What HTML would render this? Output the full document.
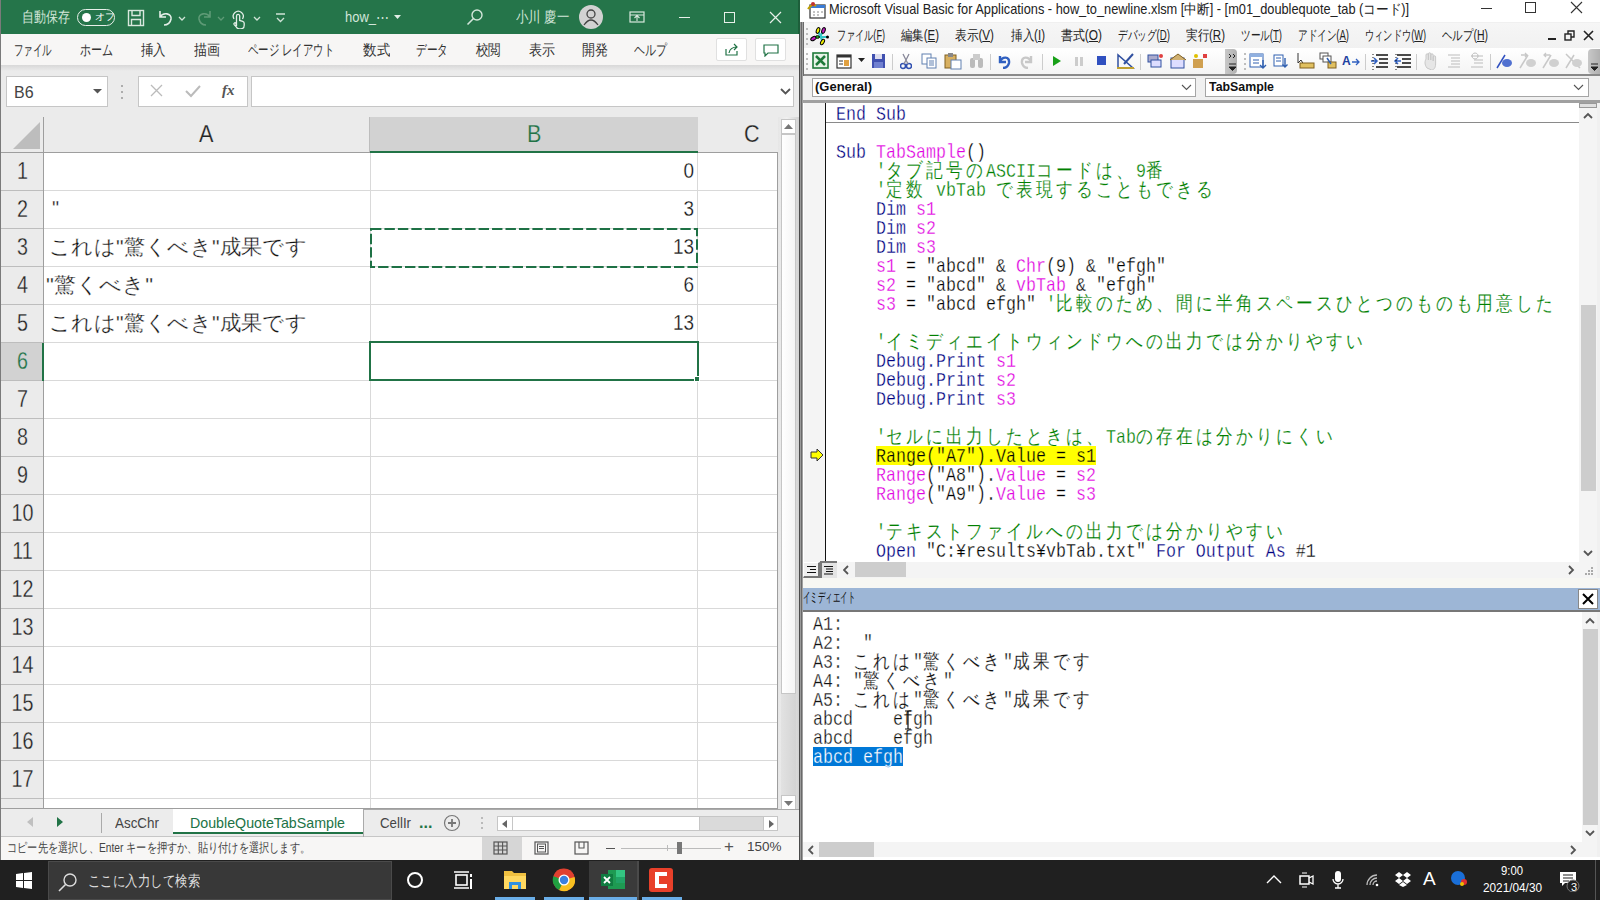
<!DOCTYPE html><html><head><meta charset="utf-8"><style>
*{box-sizing:border-box;margin:0;padding:0}
html,body{width:1600px;height:900px;overflow:hidden;background:#fff;font-family:"Liberation Sans",sans-serif;}
.a{position:absolute}
.t{position:absolute;white-space:pre;line-height:1}
.code{position:absolute;font-family:"Liberation Mono",monospace;font-size:16.667px;white-space:pre;line-height:19px;height:19px;transform:scaleY(1.2);transform-origin:0 0}
.w{font-size:17px;letter-spacing:3px}
.code{-webkit-text-stroke:0.25px #fff}
.w{-webkit-text-stroke-width:0.15px}
.k{color:#000080}.m{color:#e000e0}.c{color:#008000}
</style></head><body>
<div class="a" style="left:0px;top:0px;width:800px;height:860px;background:#ebebeb"></div>
<div class="a" style="left:0px;top:0px;width:1px;height:860px;background:#7a7a7a"></div>
<div class="a" style="left:1px;top:0px;width:799px;height:34px;background:#25754a"></div>
<div class="t" style="left:22px;top:9px;font-size:15px;color:#d3e6da;transform:scaleX(0.8000);transform-origin:0 0;">自動保存</div>
<div class="a" style="left:77px;top:9px;width:38px;height:17px;border:1.5px solid #e8f0ea;border-radius:9px"></div>
<div class="a" style="left:82px;top:13px;width:9px;height:9px;background:#fff;border-radius:50%"></div>
<div class="t" style="left:95px;top:12px;font-size:10px;color:#fff">オフ</div>
<svg class="a" style="left:127px;top:9px;" width="18" height="18" viewBox="0 0 18 18"><rect x="1.5" y="1.5" width="15" height="15" fill="none" stroke="#d9e8de" stroke-width="1.4"/><path d="M5 1.5 v5 h8 v-5 M4.5 16.5 v-6 h9 v6" fill="none" stroke="#d9e8de" stroke-width="1.4"/></svg>
<svg class="a" style="left:155px;top:7px;" width="120" height="22" viewBox="0 0 120 22"><path d="M5 4 v6 h6 M5 10 C8 5 17 6 16 12 C15 17 11 18 9 18" fill="none" stroke="#e3eee7" stroke-width="1.6"/><path d="M24 10 l3 3 l3 -3" fill="none" stroke="#cfe3d6" stroke-width="1.3"/><path d="M55 4 v6 h-6 M55 10 C52 5 43 6 44 12 C45 17 49 18 51 18" fill="none" stroke="#5e9a76" stroke-width="1.6"/><path d="M63 10 l3 3 l3 -3" fill="none" stroke="#5e9a76" stroke-width="1.3"/><path d="M79 12 a5 5 0 1 1 8.5 0" fill="none" stroke="#e3eee7" stroke-width="1.3"/><path d="M81.5 19 v-10 a1.6 1.6 0 0 1 3.2 0 v4.5 l3 0.8 a2 2 0 0 1 1.5 2 v2 q0 3.5 -3.5 3.5 h-1.5 q-2 0 -3 -2 l-2 -2.2 a1.1 1.1 0 0 1 1.6 -1.5z" fill="none" stroke="#e3eee7" stroke-width="1.3"/><path d="M99 10 l3 3 l3 -3" fill="none" stroke="#cfe3d6" stroke-width="1.3"/></svg>
<svg class="a" style="left:273px;top:10px;" width="16" height="16" viewBox="0 0 16 16"><path d="M3 4 h9 M4 8 l3.5 3.5 l3.5 -3.5" fill="none" stroke="#cfe3d6" stroke-width="1.3"/></svg>
<div class="t" style="left:345px;top:9px;font-size:15px;color:#d3e6da;transform:scaleX(0.8651);transform-origin:0 0;">how_⋯</div>
<svg class="a" style="left:393px;top:13px;" width="10" height="8" viewBox="0 0 10 8"><path d="M1 2 h7 l-3.5 4z" fill="#e3eee7"/></svg>
<svg class="a" style="left:464px;top:6px;" width="22" height="22" viewBox="0 0 22 22"><circle cx="13" cy="9" r="5" fill="none" stroke="#d3e6da" stroke-width="1.4"/><path d="M9.5 12.5 L3.5 18.5" stroke="#d3e6da" stroke-width="1.6"/></svg>
<div class="t" style="left:516px;top:9px;font-size:15px;color:#d3e6da;transform:scaleX(0.8259);transform-origin:0 0;">小川 慶一</div>
<div class="a" style="left:579px;top:5px;width:24px;height:24px;border-radius:50%;background:#d2d2d2"></div>
<svg class="a" style="left:579px;top:5px;" width="24" height="24" viewBox="0 0 24 24"><circle cx="12" cy="9" r="4" fill="none" stroke="#444" stroke-width="1.3"/><path d="M5 20 q7 -10 14 0" fill="none" stroke="#444" stroke-width="1.3"/></svg>
<svg class="a" style="left:628px;top:9px;" width="20" height="16" viewBox="0 0 20 16"><rect x="2" y="3" width="14" height="10" fill="none" stroke="#d9e8de" stroke-width="1.2"/><path d="M2 6 h14 M9 12 v-5 M6.5 9 l2.5 -2.5 l2.5 2.5" fill="none" stroke="#d9e8de" stroke-width="1.1"/></svg>
<div class="a" style="left:679px;top:17px;width:11px;height:1px;background:#e8f0ea"></div>
<div class="a" style="left:724px;top:12px;width:11px;height:11px;border:1px solid #e8f0ea"></div>
<svg class="a" style="left:769px;top:11px;" width="14" height="14" viewBox="0 0 14 14"><path d="M1 1 L12 12 M12 1 L1 12" stroke="#e8f0ea" stroke-width="1.2"/></svg>
<div class="a" style="left:1px;top:34px;width:799px;height:31px;background:#f7f6f5"></div>
<div class="a" style="left:1px;top:65px;width:799px;height:6px;background:linear-gradient(#d8d8d8,#ebebeb)"></div>
<div class="t" style="left:14px;top:43px;font-size:14.5px;color:#333;transform:scaleX(0.6333);transform-origin:0 0;">ファイル</div>
<div class="t" style="left:80px;top:43px;font-size:14.5px;color:#333;transform:scaleX(0.7333);transform-origin:0 0;">ホーム</div>
<div class="t" style="left:141px;top:43px;font-size:14.5px;color:#333;transform:scaleX(0.8333);transform-origin:0 0;">挿入</div>
<div class="t" style="left:194px;top:43px;font-size:14.5px;color:#333;transform:scaleX(0.8667);transform-origin:0 0;">描画</div>
<div class="t" style="left:248px;top:43px;font-size:14.5px;color:#333;transform:scaleX(0.6934);transform-origin:0 0;">ページ レイアウト</div>
<div class="t" style="left:363px;top:43px;font-size:14.5px;color:#333;transform:scaleX(0.9000);transform-origin:0 0;">数式</div>
<div class="t" style="left:416px;top:43px;font-size:14.5px;color:#333;transform:scaleX(0.7111);transform-origin:0 0;">データ</div>
<div class="t" style="left:476px;top:43px;font-size:14.5px;color:#333;transform:scaleX(0.8333);transform-origin:0 0;">校閲</div>
<div class="t" style="left:529px;top:43px;font-size:14.5px;color:#333;transform:scaleX(0.8667);transform-origin:0 0;">表示</div>
<div class="t" style="left:582px;top:43px;font-size:14.5px;color:#333;transform:scaleX(0.8667);transform-origin:0 0;">開発</div>
<div class="t" style="left:634px;top:43px;font-size:14.5px;color:#333;transform:scaleX(0.7333);transform-origin:0 0;">ヘルプ</div>
<div class="a" style="left:716px;top:38px;width:31px;height:23px;background:#fff;border:1px solid #e0e0e0;border-radius:2px"></div>
<svg class="a" style="left:723px;top:42px;" width="18" height="16" viewBox="0 0 18 16"><path d="M3 7 v6 h11 v-4 M6 11 q1 -6 8 -6 M11 2 l3 3 l-3 3" fill="none" stroke="#217346" stroke-width="1.2"/></svg>
<div class="a" style="left:755px;top:38px;width:31px;height:23px;background:#fff;border:1px solid #e0e0e0;border-radius:2px"></div>
<svg class="a" style="left:762px;top:43px;" width="18" height="14" viewBox="0 0 18 14"><path d="M2 2 h14 v8 h-10 l-3 3 v-3 h-1z" fill="none" stroke="#217346" stroke-width="1.2"/></svg>
<div class="a" style="left:6px;top:76px;width:102px;height:31px;background:#fff;border:1px solid #c6c6c6"></div>
<div class="t" style="left:14px;top:85px;font-size:16px;color:#444">B6</div>
<svg class="a" style="left:92px;top:88px;" width="12" height="8" viewBox="0 0 12 8"><path d="M1 1 h9 l-4.5 4.5z" fill="#555"/></svg>
<svg class="a" style="left:119px;top:83px;" width="6" height="18" viewBox="0 0 6 18"><circle cx="3" cy="3" r="1" fill="#999"/><circle cx="3" cy="9" r="1" fill="#999"/><circle cx="3" cy="15" r="1" fill="#999"/></svg>
<div class="a" style="left:138px;top:76px;width:110px;height:31px;background:#fff;border:1px solid #c6c6c6"></div>
<svg class="a" style="left:150px;top:84px;" width="14" height="14" viewBox="0 0 14 14"><path d="M1 1 L12 12 M12 1 L1 12" stroke="#bbb" stroke-width="1.3"/></svg>
<svg class="a" style="left:185px;top:84px;" width="16" height="14" viewBox="0 0 16 14"><path d="M1 7 L6 12 L15 2" fill="none" stroke="#bbb" stroke-width="2"/></svg>
<div class="t" style="left:222px;top:83px;font-size:15px;color:#555;font-family:'Liberation Serif',serif;font-style:italic;font-weight:bold">fx</div>
<div class="a" style="left:251px;top:76px;width:543px;height:31px;background:#fff;border:1px solid #c6c6c6"></div>
<svg class="a" style="left:780px;top:87px;" width="12" height="9" viewBox="0 0 12 9"><path d="M1 2 L5.5 6.5 L10 2" fill="none" stroke="#555" stroke-width="1.8"/></svg>
<div class="a" style="left:1px;top:117px;width:43px;height:36px;background:#ebebeb;border-right:1px solid #bdbdbd"></div>
<svg class="a" style="left:12px;top:121px;" width="30" height="30" viewBox="0 0 30 30"><path d="M28 1 V28 H1z" fill="#bdbdbd"/></svg>
<div class="a" style="left:44px;top:117px;width:326px;height:36px;background:#ebebeb;border-right:1px solid #bdbdbd"></div>
<div class="t" style="left:199px;top:122px;font-size:24px;color:#222;-webkit-text-stroke:0.25px #ebebeb;transform:scaleX(0.9);transform-origin:0 0">A</div>
<div class="a" style="left:370px;top:117px;width:328px;height:36px;background:#d2d2d2"></div>
<div class="t" style="left:527px;top:122px;font-size:24px;color:#217346;-webkit-text-stroke:0.25px #d2d2d2;transform:scaleX(0.9);transform-origin:0 0">B</div>
<div class="a" style="left:698px;top:117px;width:80px;height:36px;background:#ebebeb"></div>
<div class="t" style="left:744px;top:122px;font-size:24px;color:#222;-webkit-text-stroke:0.25px #ebebeb;transform:scaleX(0.9);transform-origin:0 0">C</div>
<div class="a" style="left:1px;top:152px;width:777px;height:1px;background:#9e9e9e"></div>
<div class="a" style="left:370px;top:151px;width:328px;height:2px;background:#217346"></div>
<div class="a" style="left:44px;top:153px;width:734px;height:656px;background:#fff"></div>
<div class="a" style="left:1px;top:153px;width:42px;height:38px;background:#ebebeb"></div>
<div class="t" style="left:1px;top:160px;width:43px;text-align:center;font-size:23.5px;color:#222;-webkit-text-stroke:0.3px #ebebeb;transform:scaleX(0.84);transform-origin:50% 0">1</div>
<div class="a" style="left:1px;top:190px;width:777px;height:1px;background:#d9d9d9"></div>
<div class="a" style="left:1px;top:190px;width:43px;height:1px;background:#bdbdbd"></div>
<div class="a" style="left:1px;top:191px;width:42px;height:38px;background:#ebebeb"></div>
<div class="t" style="left:1px;top:198px;width:43px;text-align:center;font-size:23.5px;color:#222;-webkit-text-stroke:0.3px #ebebeb;transform:scaleX(0.84);transform-origin:50% 0">2</div>
<div class="a" style="left:1px;top:228px;width:777px;height:1px;background:#d9d9d9"></div>
<div class="a" style="left:1px;top:228px;width:43px;height:1px;background:#bdbdbd"></div>
<div class="a" style="left:1px;top:229px;width:42px;height:38px;background:#ebebeb"></div>
<div class="t" style="left:1px;top:236px;width:43px;text-align:center;font-size:23.5px;color:#222;-webkit-text-stroke:0.3px #ebebeb;transform:scaleX(0.84);transform-origin:50% 0">3</div>
<div class="a" style="left:1px;top:266px;width:777px;height:1px;background:#d9d9d9"></div>
<div class="a" style="left:1px;top:266px;width:43px;height:1px;background:#bdbdbd"></div>
<div class="a" style="left:1px;top:267px;width:42px;height:38px;background:#ebebeb"></div>
<div class="t" style="left:1px;top:274px;width:43px;text-align:center;font-size:23.5px;color:#222;-webkit-text-stroke:0.3px #ebebeb;transform:scaleX(0.84);transform-origin:50% 0">4</div>
<div class="a" style="left:1px;top:304px;width:777px;height:1px;background:#d9d9d9"></div>
<div class="a" style="left:1px;top:304px;width:43px;height:1px;background:#bdbdbd"></div>
<div class="a" style="left:1px;top:305px;width:42px;height:38px;background:#ebebeb"></div>
<div class="t" style="left:1px;top:312px;width:43px;text-align:center;font-size:23.5px;color:#222;-webkit-text-stroke:0.3px #ebebeb;transform:scaleX(0.84);transform-origin:50% 0">5</div>
<div class="a" style="left:1px;top:342px;width:777px;height:1px;background:#d9d9d9"></div>
<div class="a" style="left:1px;top:342px;width:43px;height:1px;background:#bdbdbd"></div>
<div class="a" style="left:1px;top:343px;width:42px;height:38px;background:#d2d2d2"></div>
<div class="t" style="left:1px;top:350px;width:43px;text-align:center;font-size:23.5px;color:#217346;-webkit-text-stroke:0.3px #d2d2d2;transform:scaleX(0.84);transform-origin:50% 0">6</div>
<div class="a" style="left:1px;top:380px;width:777px;height:1px;background:#d9d9d9"></div>
<div class="a" style="left:1px;top:380px;width:43px;height:1px;background:#bdbdbd"></div>
<div class="a" style="left:1px;top:381px;width:42px;height:38px;background:#ebebeb"></div>
<div class="t" style="left:1px;top:388px;width:43px;text-align:center;font-size:23.5px;color:#222;-webkit-text-stroke:0.3px #ebebeb;transform:scaleX(0.84);transform-origin:50% 0">7</div>
<div class="a" style="left:1px;top:418px;width:777px;height:1px;background:#d9d9d9"></div>
<div class="a" style="left:1px;top:418px;width:43px;height:1px;background:#bdbdbd"></div>
<div class="a" style="left:1px;top:419px;width:42px;height:38px;background:#ebebeb"></div>
<div class="t" style="left:1px;top:426px;width:43px;text-align:center;font-size:23.5px;color:#222;-webkit-text-stroke:0.3px #ebebeb;transform:scaleX(0.84);transform-origin:50% 0">8</div>
<div class="a" style="left:1px;top:456px;width:777px;height:1px;background:#d9d9d9"></div>
<div class="a" style="left:1px;top:456px;width:43px;height:1px;background:#bdbdbd"></div>
<div class="a" style="left:1px;top:457px;width:42px;height:38px;background:#ebebeb"></div>
<div class="t" style="left:1px;top:464px;width:43px;text-align:center;font-size:23.5px;color:#222;-webkit-text-stroke:0.3px #ebebeb;transform:scaleX(0.84);transform-origin:50% 0">9</div>
<div class="a" style="left:1px;top:494px;width:777px;height:1px;background:#d9d9d9"></div>
<div class="a" style="left:1px;top:494px;width:43px;height:1px;background:#bdbdbd"></div>
<div class="a" style="left:1px;top:495px;width:42px;height:38px;background:#ebebeb"></div>
<div class="t" style="left:1px;top:502px;width:43px;text-align:center;font-size:23.5px;color:#222;-webkit-text-stroke:0.3px #ebebeb;transform:scaleX(0.84);transform-origin:50% 0">10</div>
<div class="a" style="left:1px;top:532px;width:777px;height:1px;background:#d9d9d9"></div>
<div class="a" style="left:1px;top:532px;width:43px;height:1px;background:#bdbdbd"></div>
<div class="a" style="left:1px;top:533px;width:42px;height:38px;background:#ebebeb"></div>
<div class="t" style="left:1px;top:540px;width:43px;text-align:center;font-size:23.5px;color:#222;-webkit-text-stroke:0.3px #ebebeb;transform:scaleX(0.84);transform-origin:50% 0">11</div>
<div class="a" style="left:1px;top:570px;width:777px;height:1px;background:#d9d9d9"></div>
<div class="a" style="left:1px;top:570px;width:43px;height:1px;background:#bdbdbd"></div>
<div class="a" style="left:1px;top:571px;width:42px;height:38px;background:#ebebeb"></div>
<div class="t" style="left:1px;top:578px;width:43px;text-align:center;font-size:23.5px;color:#222;-webkit-text-stroke:0.3px #ebebeb;transform:scaleX(0.84);transform-origin:50% 0">12</div>
<div class="a" style="left:1px;top:608px;width:777px;height:1px;background:#d9d9d9"></div>
<div class="a" style="left:1px;top:608px;width:43px;height:1px;background:#bdbdbd"></div>
<div class="a" style="left:1px;top:609px;width:42px;height:38px;background:#ebebeb"></div>
<div class="t" style="left:1px;top:616px;width:43px;text-align:center;font-size:23.5px;color:#222;-webkit-text-stroke:0.3px #ebebeb;transform:scaleX(0.84);transform-origin:50% 0">13</div>
<div class="a" style="left:1px;top:646px;width:777px;height:1px;background:#d9d9d9"></div>
<div class="a" style="left:1px;top:646px;width:43px;height:1px;background:#bdbdbd"></div>
<div class="a" style="left:1px;top:647px;width:42px;height:38px;background:#ebebeb"></div>
<div class="t" style="left:1px;top:654px;width:43px;text-align:center;font-size:23.5px;color:#222;-webkit-text-stroke:0.3px #ebebeb;transform:scaleX(0.84);transform-origin:50% 0">14</div>
<div class="a" style="left:1px;top:684px;width:777px;height:1px;background:#d9d9d9"></div>
<div class="a" style="left:1px;top:684px;width:43px;height:1px;background:#bdbdbd"></div>
<div class="a" style="left:1px;top:685px;width:42px;height:38px;background:#ebebeb"></div>
<div class="t" style="left:1px;top:692px;width:43px;text-align:center;font-size:23.5px;color:#222;-webkit-text-stroke:0.3px #ebebeb;transform:scaleX(0.84);transform-origin:50% 0">15</div>
<div class="a" style="left:1px;top:722px;width:777px;height:1px;background:#d9d9d9"></div>
<div class="a" style="left:1px;top:722px;width:43px;height:1px;background:#bdbdbd"></div>
<div class="a" style="left:1px;top:723px;width:42px;height:38px;background:#ebebeb"></div>
<div class="t" style="left:1px;top:730px;width:43px;text-align:center;font-size:23.5px;color:#222;-webkit-text-stroke:0.3px #ebebeb;transform:scaleX(0.84);transform-origin:50% 0">16</div>
<div class="a" style="left:1px;top:760px;width:777px;height:1px;background:#d9d9d9"></div>
<div class="a" style="left:1px;top:760px;width:43px;height:1px;background:#bdbdbd"></div>
<div class="a" style="left:1px;top:761px;width:42px;height:38px;background:#ebebeb"></div>
<div class="t" style="left:1px;top:768px;width:43px;text-align:center;font-size:23.5px;color:#222;-webkit-text-stroke:0.3px #ebebeb;transform:scaleX(0.84);transform-origin:50% 0">17</div>
<div class="a" style="left:1px;top:798px;width:777px;height:1px;background:#d9d9d9"></div>
<div class="a" style="left:1px;top:798px;width:43px;height:1px;background:#bdbdbd"></div>
<div class="a" style="left:1px;top:799px;width:42px;height:10px;background:#ebebeb"></div>
<div class="a" style="left:43px;top:117px;width:1px;height:692px;background:#9e9e9e"></div>
<div class="a" style="left:44px;top:153px;width:1px;height:0px;"></div>
<div class="a" style="left:370px;top:153px;width:1px;height:656px;background:#d9d9d9"></div>
<div class="a" style="left:697px;top:153px;width:1px;height:656px;background:#d9d9d9"></div>
<div class="a" style="left:777px;top:153px;width:1px;height:656px;background:#9e9e9e"></div>
<div class="a" style="left:1px;top:808px;width:777px;height:1px;background:#9e9e9e"></div>
<div class="a" style="left:42px;top:343px;width:2px;height:38px;background:#217346"></div>
<div class="t" style="left:372px;top:160px;width:322px;text-align:right;font-size:22px;color:#111;-webkit-text-stroke:0.3px #fff;transform:scaleX(0.86);transform-origin:100% 0">0</div>
<div class="t" style="left:372px;top:198px;width:322px;text-align:right;font-size:22px;color:#111;-webkit-text-stroke:0.3px #fff;transform:scaleX(0.86);transform-origin:100% 0">3</div>
<div class="t" style="left:372px;top:236px;width:322px;text-align:right;font-size:22px;color:#111;-webkit-text-stroke:0.3px #fff;transform:scaleX(0.86);transform-origin:100% 0">13</div>
<div class="t" style="left:372px;top:274px;width:322px;text-align:right;font-size:22px;color:#111;-webkit-text-stroke:0.3px #fff;transform:scaleX(0.86);transform-origin:100% 0">6</div>
<div class="t" style="left:372px;top:312px;width:322px;text-align:right;font-size:22px;color:#111;-webkit-text-stroke:0.3px #fff;transform:scaleX(0.86);transform-origin:100% 0">13</div>
<div class="t" style="left:52px;top:198px;font-size:20px;color:#111;-webkit-text-stroke:0.3px #fff">"</div>
<div class="t" style="left:49px;top:236px;font-size:21px;color:#111;-webkit-text-stroke:0.3px #fff;transform:scaleX(1.0161);transform-origin:0 0;">これは"驚くべき"成果です</div>
<div class="t" style="left:46px;top:274px;font-size:21px;color:#111;-webkit-text-stroke:0.3px #fff;transform:scaleX(1.0498);transform-origin:0 0;">"驚くべき"</div>
<div class="t" style="left:49px;top:312px;font-size:21px;color:#111;-webkit-text-stroke:0.3px #fff;transform:scaleX(1.0161);transform-origin:0 0;">これは"驚くべき"成果です</div>
<svg class="a" style="left:368px;top:226px;" width="332" height="44" viewBox="0 0 332 44"><rect x="3" y="3" width="326" height="38" fill="none" stroke="#1e7145" stroke-width="2" stroke-dasharray="10.4 3.05"/></svg>
<div class="a" style="left:369px;top:341px;width:330px;height:40px;border:2px solid #217346"></div>
<div class="a" style="left:694px;top:376px;width:6px;height:6px;background:#217346;border:1px solid #fff"></div>
<div class="a" style="left:778px;top:117px;width:22px;height:692px;background:linear-gradient(90deg,#e6e6e6,#f0f0f0 40%,#d0d0d0)"></div>
<div class="a" style="left:781px;top:119px;width:15px;height:690px;background:linear-gradient(90deg,#e2e2e2,#d4d4d4)"></div>
<div class="a" style="left:781px;top:134px;width:15px;height:560px;background:linear-gradient(90deg,#fff,#f4f4f4);border:1px solid #c6c6c6"></div>
<div class="a" style="left:781px;top:119px;width:15px;height:15px;background:#fff;border:1px solid #c6c6c6"></div>
<svg class="a" style="left:783px;top:123px;" width="11" height="7" viewBox="0 0 11 7"><path d="M1 6 h9 l-4.5 -5z" fill="#777"/></svg>
<div class="a" style="left:781px;top:795px;width:15px;height:15px;background:#fff;border:1px solid #c6c6c6"></div>
<svg class="a" style="left:783px;top:800px;" width="11" height="7" viewBox="0 0 11 7"><path d="M1 1 h9 l-4.5 5z" fill="#777"/></svg>
<div class="a" style="left:1px;top:809px;width:799px;height:28px;background:#ececec"></div>
<div class="a" style="left:1px;top:836px;width:799px;height:1px;background:#c6c6c6"></div>
<svg class="a" style="left:25px;top:815px;" width="10" height="14" viewBox="0 0 10 14"><path d="M8 2 v10 l-6 -5z" fill="#c0c0c0"/></svg>
<svg class="a" style="left:55px;top:815px;" width="10" height="14" viewBox="0 0 10 14"><path d="M2 2 v10 l6 -5z" fill="#217346"/></svg>
<div class="a" style="left:101px;top:813px;width:1px;height:20px;background:#aaa"></div>
<div class="t" style="left:115px;top:815px;font-size:15px;color:#444;transform:scaleX(0.8945);transform-origin:0 0;">AscChr</div>
<div class="a" style="left:173px;top:809px;width:190px;height:25px;background:#fff"></div>
<div class="a" style="left:173px;top:832px;width:190px;height:2px;background:#217346"></div>
<div class="t" style="left:190px;top:815px;font-size:15px;color:#217346;transform:scaleX(0.9483);transform-origin:0 0;">DoubleQuoteTabSample</div>
<div class="a" style="left:363px;top:809px;width:1px;height:28px;background:#aaa"></div>
<div class="a" style="left:363px;top:809px;width:437px;height:1px;background:#aaa"></div>
<div class="t" style="left:380px;top:815px;font-size:15px;color:#444;transform:scaleX(0.8853);transform-origin:0 0;">CellIr</div>
<div class="t" style="left:419px;top:815px;font-size:16px;color:#217346;font-weight:bold">...</div>
<svg class="a" style="left:443px;top:814px;" width="18" height="18" viewBox="0 0 18 18"><circle cx="9" cy="9" r="7.5" fill="none" stroke="#777" stroke-width="1.2"/><path d="M9 5 v8 M5 9 h8" stroke="#777" stroke-width="1.8"/></svg>
<svg class="a" style="left:480px;top:815px;" width="4" height="16" viewBox="0 0 4 16"><circle cx="2" cy="3" r="1" fill="#aaa"/><circle cx="2" cy="8" r="1" fill="#aaa"/><circle cx="2" cy="13" r="1" fill="#aaa"/></svg>
<div class="a" style="left:497px;top:816px;width:280px;height:15px;background:#dadada;border:1px solid #c6c6c6"></div>
<div class="a" style="left:497px;top:816px;width:16px;height:15px;background:#fff;border:1px solid #c6c6c6"></div>
<svg class="a" style="left:500px;top:819px;" width="10" height="10" viewBox="0 0 10 10"><path d="M7 1 v8 l-5 -4z" fill="#666"/></svg>
<div class="a" style="left:512px;top:816px;width:188px;height:15px;background:#fff;border:1px solid #c6c6c6"></div>
<div class="a" style="left:763px;top:816px;width:15px;height:15px;background:#fff;border:1px solid #c6c6c6"></div>
<svg class="a" style="left:766px;top:819px;" width="10" height="10" viewBox="0 0 10 10"><path d="M3 1 v8 l5 -4z" fill="#666"/></svg>
<div class="a" style="left:1px;top:837px;width:799px;height:23px;background:#f7f6f5"></div>
<div class="t" style="left:7px;top:841px;font-size:13px;color:#444;transform:scaleX(0.7856);transform-origin:0 0;">コピー先を選択し、Enter キーを押すか、貼り付けを選択します。</div>
<div class="a" style="left:482px;top:837px;width:40px;height:23px;background:#d6d6d6"></div>
<svg class="a" style="left:493px;top:841px;" width="16" height="14" viewBox="0 0 16 14"><rect x="1" y="1" width="13" height="12" fill="none" stroke="#555" stroke-width="1.2"/><path d="M1 5 h13 M1 9 h13 M5.3 1 v12 M9.6 1 v12" stroke="#555" stroke-width="1.1"/></svg>
<svg class="a" style="left:534px;top:841px;" width="16" height="14" viewBox="0 0 16 14"><rect x="1" y="1" width="13" height="12" fill="none" stroke="#555" stroke-width="1.2"/><rect x="3.5" y="3" width="8" height="8" fill="none" stroke="#555" stroke-width="1"/><path d="M5 5.5 h5 M5 7.5 h5" stroke="#555"/></svg>
<svg class="a" style="left:574px;top:841px;" width="16" height="14" viewBox="0 0 16 14"><rect x="1" y="1" width="13" height="12" fill="none" stroke="#555" stroke-width="1.2"/><path d="M5 1 v6 h5 v-6" fill="none" stroke="#555" stroke-width="1.1"/></svg>
<div class="a" style="left:606px;top:848px;width:9px;height:1px;background:#555"></div>
<div class="a" style="left:621px;top:848px;width:100px;height:1px;background:#bbb"></div>
<div class="a" style="left:667px;top:845px;width:1px;height:6px;background:#bbb"></div>
<div class="a" style="left:677px;top:842px;width:5px;height:12px;background:#777"></div>
<div class="t" style="left:724px;top:838px;font-size:17px;color:#555">+</div>
<div class="t" style="left:747px;top:840px;font-size:13.5px;color:#444">150%</div>
<div class="a" style="left:799px;top:34px;width:1px;height:826px;background:#4a4a4a"></div>
<div class="a" style="left:798px;top:0px;width:2px;height:34px;background:#1d5e3a"></div>
<div class="a" style="left:800px;top:0px;width:800px;height:860px;background:#f0f0f0"></div>
<div class="a" style="left:800px;top:22px;width:4px;height:838px;background:#8a8a8a"></div>
<div class="a" style="left:800px;top:22px;width:1px;height:838px;background:#9a9a9a"></div>
<div class="a" style="left:801px;top:22px;width:1px;height:838px;background:#6a6a6a"></div>
<div class="a" style="left:802px;top:22px;width:1px;height:838px;background:#a0a0a0"></div>
<div class="a" style="left:803px;top:22px;width:1px;height:838px;background:#6a6a6a"></div>
<div class="a" style="left:800px;top:0px;width:800px;height:22px;background:#fff"></div>
<svg class="a" style="left:807px;top:2px;" width="20" height="17" viewBox="0 0 20 17"><rect x="3" y="3" width="15" height="13" fill="#fff" stroke="#333" stroke-width="1.2"/><rect x="3" y="3" width="15" height="3" fill="#3a7bd5"/><path d="M6 10 h2 M10 10 h2 M14 10 h2 M6 13 h2 M10 13 h2" stroke="#888"/><path d="M1 7 q4 -6 8 -3" fill="none" stroke="#c0a000" stroke-width="2"/><circle cx="6" cy="2" r="2" fill="#c03030"/></svg>
<div class="t" style="left:829px;top:2px;font-size:14.2px;color:#222;transform:scaleX(0.9020);transform-origin:0 0;">Microsoft Visual Basic for Applications - how_to_newline.xlsm [中断] - [m01_doublequote_tab (コード)]</div>
<div class="a" style="left:1481px;top:8px;width:11px;height:1px;background:#333"></div>
<div class="a" style="left:1525px;top:2px;width:11px;height:11px;border:1px solid #333"></div>
<svg class="a" style="left:1570px;top:1px;" width="14" height="14" viewBox="0 0 14 14"><path d="M1 1 L12 12 M12 1 L1 12" stroke="#333" stroke-width="1.1"/></svg>
<div class="a" style="left:804px;top:23px;width:796px;height:25px;background:linear-gradient(#f6f6f6,#f1f1f1)"></div>
<svg class="a" style="left:805px;top:27px;" width="4" height="18" viewBox="0 0 4 18"><circle cx="2" cy="2" r="1" fill="#aaa"/><circle cx="2" cy="7" r="1" fill="#aaa"/><circle cx="2" cy="12" r="1" fill="#aaa"/><circle cx="2" cy="17" r="1" fill="#aaa"/></svg>
<svg class="a" style="left:810px;top:26px;" width="20" height="20" viewBox="0 0 20 20"><path d="M3 11 L17 11 M8 5 L13 16 M13 5 L10 11" stroke="#30c8c8" stroke-width="2.2"/><g stroke="#000" stroke-width="1"><ellipse cx="8" cy="4.5" rx="1.6" ry="3" fill="#f0f000" transform="rotate(20 8 4.5)"/><ellipse cx="13.5" cy="4.5" rx="1.6" ry="3" fill="#c020c0" transform="rotate(20 13.5 4.5)"/><ellipse cx="3.5" cy="12.5" rx="3" ry="1.7" fill="#c020c0" transform="rotate(-30 3.5 12.5)"/><ellipse cx="12.5" cy="16" rx="1.6" ry="3" fill="#f0f000" transform="rotate(30 12.5 16)"/><ellipse cx="7.5" cy="11" rx="2" ry="1.3" fill="#20c020"/></g><circle cx="17.5" cy="11" r="1.5" fill="#000"/></svg>
<div class="t" style="left:837px;top:28px;font-size:14px;color:#222;transform:scaleX(0.6495);transform-origin:0 0;">ファイル(<u>F</u>)</div>
<div class="t" style="left:901px;top:28px;font-size:14px;color:#222;transform:scaleX(0.8139);transform-origin:0 0;">編集(<u>E</u>)</div>
<div class="t" style="left:955px;top:28px;font-size:14px;color:#222;transform:scaleX(0.8353);transform-origin:0 0;">表示(<u>V</u>)</div>
<div class="t" style="left:1011px;top:28px;font-size:14px;color:#222;transform:scaleX(0.8246);transform-origin:0 0;">挿入(<u>I</u>)</div>
<div class="t" style="left:1061px;top:28px;font-size:14px;color:#222;transform:scaleX(0.8500);transform-origin:0 0;">書式(<u>O</u>)</div>
<div class="t" style="left:1118px;top:28px;font-size:14px;color:#222;transform:scaleX(0.6890);transform-origin:0 0;">デバッグ(<u>D</u>)</div>
<div class="t" style="left:1186px;top:28px;font-size:14px;color:#222;transform:scaleX(0.8216);transform-origin:0 0;">実行(<u>R</u>)</div>
<div class="t" style="left:1241px;top:28px;font-size:14px;color:#222;transform:scaleX(0.6844);transform-origin:0 0;">ツール(<u>T</u>)</div>
<div class="t" style="left:1298px;top:28px;font-size:14px;color:#222;transform:scaleX(0.6828);transform-origin:0 0;">アドイン(<u>A</u>)</div>
<div class="t" style="left:1365px;top:28px;font-size:14px;color:#222;transform:scaleX(0.6590);transform-origin:0 0;">ウィンドウ(<u>W</u>)</div>
<div class="t" style="left:1442px;top:28px;font-size:14px;color:#222;transform:scaleX(0.7483);transform-origin:0 0;">ヘルプ(<u>H</u>)</div>
<div class="a" style="left:1548px;top:38px;width:8px;height:2px;background:#222"></div>
<svg class="a" style="left:1564px;top:30px;" width="12" height="12" viewBox="0 0 12 12"><rect x="1" y="4" width="6" height="6" fill="none" stroke="#222" stroke-width="1.4"/><path d="M4 4 V1 h6 v6 h-3" fill="none" stroke="#222" stroke-width="1.4"/></svg>
<svg class="a" style="left:1583px;top:30px;" width="11" height="11" viewBox="0 0 11 11"><path d="M1 1 L10 10 M10 1 L1 10" stroke="#222" stroke-width="1.6"/></svg>
<div class="a" style="left:804px;top:48px;width:796px;height:26px;background:linear-gradient(#ffffff,#f4f4f4)"></div>
<div class="a" style="left:804px;top:74px;width:796px;height:2px;background:#8a8a8a"></div>
<div class="a" style="left:804px;top:76px;width:796px;height:1px;background:#c0c0c0"></div>
<svg class="a" style="left:805px;top:52px;" width="4" height="18" viewBox="0 0 4 18"><circle cx="2" cy="2" r="1" fill="#aaa"/><circle cx="2" cy="7" r="1" fill="#aaa"/><circle cx="2" cy="12" r="1" fill="#aaa"/><circle cx="2" cy="17" r="1" fill="#aaa"/></svg>
<svg class="a" style="left:812px;top:52px;" width="18" height="17" viewBox="0 0 18 17"><rect x="1" y="1" width="15" height="15" fill="#e8f3e8" stroke="#1f7a3a" stroke-width="1.6"/><path d="M4 4 L13 13 M13 4 L4 13" stroke="#1f7a3a" stroke-width="2.5"/></svg>
<svg class="a" style="left:836px;top:54px;" width="16" height="15" viewBox="0 0 16 15"><rect x="1" y="1" width="14" height="13" fill="#fff" stroke="#333" stroke-width="1.2"/><rect x="1" y="1" width="14" height="2.5" fill="#333"/><path d="M3 7 h4 M3 10 h4" stroke="#333"/><rect x="8" y="6" width="5" height="6" fill="#e0a040"/></svg>
<svg class="a" style="left:858px;top:58px;" width="8" height="5" viewBox="0 0 8 5"><path d="M0 0 h7 l-3.5 4z" fill="#222"/></svg>
<svg class="a" style="left:871px;top:53px;" width="15" height="16" viewBox="0 0 15 16"><rect x="1" y="1" width="13" height="14" fill="#4050b0"/><rect x="4" y="1" width="7" height="5" fill="#dde"/><rect x="3" y="9" width="9" height="6" fill="#7080d0"/></svg>
<div class="a" style="left:892px;top:54px;width:1px;height:16px;background:#ccc"></div>
<svg class="a" style="left:900px;top:52px;" width="12" height="18" viewBox="0 0 12 18"><circle cx="3" cy="14" r="2.5" fill="none" stroke="#3050b0" stroke-width="1.5"/><circle cx="9" cy="14" r="2.5" fill="none" stroke="#3050b0" stroke-width="1.5"/><path d="M4 12 L9 2 M8 12 L3 2" stroke="#889" stroke-width="1.3"/></svg>
<svg class="a" style="left:921px;top:53px;" width="16" height="16" viewBox="0 0 16 16"><rect x="1" y="1" width="9" height="10" fill="#fff" stroke="#6080b0"/><rect x="6" y="5" width="9" height="10" fill="#fff" stroke="#6080b0"/><path d="M8 8 h5 M8 10 h5 M8 12 h5" stroke="#6080b0"/></svg>
<svg class="a" style="left:944px;top:52px;" width="18" height="18" viewBox="0 0 18 18"><rect x="1" y="3" width="11" height="13" fill="#d8b060" stroke="#806020"/><rect x="4" y="1" width="5" height="4" fill="#888"/><rect x="7" y="8" width="10" height="9" fill="#fff" stroke="#6080b0"/></svg>
<svg class="a" style="left:968px;top:52px;" width="18" height="18" viewBox="0 0 18 18"><rect x="2" y="6" width="5" height="10" rx="2" fill="#bbb"/><rect x="10" y="6" width="5" height="10" rx="2" fill="#bbb"/><rect x="5" y="2" width="7" height="6" fill="#ccc"/></svg>
<div class="a" style="left:990px;top:54px;width:1px;height:16px;background:#ccc"></div>
<svg class="a" style="left:996px;top:53px;" width="16" height="16" viewBox="0 0 16 16"><path d="M4 3 v6 h6" fill="none" stroke="#3060c0" stroke-width="2.4"/><path d="M4 9 C6 3 14 3 13 10 C12 14 9 15 7 15" fill="none" stroke="#3060c0" stroke-width="2.4"/></svg>
<svg class="a" style="left:1019px;top:53px;" width="16" height="16" viewBox="0 0 16 16"><path d="M12 3 v6 h-6" fill="none" stroke="#c8c8c8" stroke-width="2.4"/><path d="M12 9 C10 3 2 3 3 10 C4 14 7 15 9 15" fill="none" stroke="#c8c8c8" stroke-width="2.4"/></svg>
<div class="a" style="left:1042px;top:54px;width:1px;height:16px;background:#ccc"></div>
<svg class="a" style="left:1052px;top:55px;" width="10" height="12" viewBox="0 0 10 12"><path d="M1 1 v10 l8 -5z" fill="#18a018"/></svg>
<svg class="a" style="left:1074px;top:56px;" width="10" height="10" viewBox="0 0 10 10"><rect x="1" y="1" width="3" height="9" fill="#ccc"/><rect x="6" y="1" width="3" height="9" fill="#ccc"/></svg>
<svg class="a" style="left:1097px;top:56px;" width="10" height="10" viewBox="0 0 10 10"><rect x="0" y="0" width="9" height="9" fill="#3050c0"/></svg>
<svg class="a" style="left:1116px;top:52px;" width="20" height="18" viewBox="0 0 20 18"><path d="M2 16 L2 3 L17 16z" fill="none" stroke="#3050a0" stroke-width="1.5"/><path d="M1 16 h17" stroke="#c0a030" stroke-width="2"/><path d="M8 12 L17 2" stroke="#3050a0" stroke-width="2"/></svg>
<div class="a" style="left:1140px;top:54px;width:1px;height:16px;background:#ccc"></div>
<svg class="a" style="left:1146px;top:52px;" width="18" height="18" viewBox="0 0 18 18"><rect x="2" y="3" width="10" height="7" fill="#aac" stroke="#3050a0"/><rect x="5" y="8" width="10" height="7" fill="#ddf" stroke="#3050a0"/><circle cx="15" cy="4" r="2" fill="#e04040"/></svg>
<svg class="a" style="left:1169px;top:52px;" width="18" height="18" viewBox="0 0 18 18"><rect x="2" y="6" width="13" height="10" fill="#ddf" stroke="#3050a0"/><path d="M1 8 L9 2 L17 8" fill="#d0b070" stroke="#806020"/></svg>
<svg class="a" style="left:1192px;top:52px;" width="16" height="18" viewBox="0 0 16 18"><rect x="1" y="7" width="10" height="9" fill="#d0a050"/><circle cx="4" cy="4" r="2" fill="#e0c000"/><rect x="11" y="2" width="4" height="4" fill="#e04040"/></svg>
<div class="a" style="left:1225px;top:49px;width:12px;height:25px;background:linear-gradient(90deg,#c8c8c8,#b0b0b0);border-radius:0 4px 4px 0"></div>
<svg class="a" style="left:1228px;top:52px;" width="9" height="20" viewBox="0 0 9 20"><path d="M1 2 l2 2 l-2 2 M5 2 l2 2 l-2 2" fill="none" stroke="#222" stroke-width="1"/><path d="M1 12 h7 M1 15 h7 l-3.5 3.5z" stroke="#222" fill="#222"/></svg>
<svg class="a" style="left:1243px;top:52px;" width="4" height="18" viewBox="0 0 4 18"><circle cx="2" cy="2" r="1" fill="#aaa"/><circle cx="2" cy="7" r="1" fill="#aaa"/><circle cx="2" cy="12" r="1" fill="#aaa"/><circle cx="2" cy="17" r="1" fill="#aaa"/></svg>
<svg class="a" style="left:1249px;top:52px;" width="18" height="18" viewBox="0 0 18 18"><rect x="1" y="2" width="13" height="13" fill="#fff" stroke="#3060b0"/><rect x="1" y="2" width="13" height="3" fill="#90b0e0"/><path d="M4 8 h6 M4 11 h6" stroke="#3060b0"/><path d="M14 8 v8 M11 13 l3 3 l3 -3" fill="none" stroke="#3060b0" stroke-width="1.4"/></svg>
<svg class="a" style="left:1273px;top:54px;" width="16" height="16" viewBox="0 0 16 16"><rect x="1" y="1" width="9" height="11" fill="#fff" stroke="#3060b0"/><path d="M3 4 h5 M3 7 h5" stroke="#3060b0"/><path d="M12 4 v9 M9.5 10.5 l2.5 2.5 l2.5 -2.5" fill="none" stroke="#3060b0" stroke-width="1.4"/></svg>
<svg class="a" style="left:1296px;top:52px;" width="20" height="18" viewBox="0 0 20 18"><path d="M2 1 L2 11 L5 8 L8 13" fill="#fff" stroke="#333"/><rect x="4" y="11" width="14" height="5" fill="#e0c060" stroke="#806020"/></svg>
<svg class="a" style="left:1319px;top:52px;" width="18" height="18" viewBox="0 0 18 18"><rect x="1" y="1" width="8" height="6" fill="#fff" stroke="#555"/><rect x="4" y="4" width="8" height="6" fill="#fff" stroke="#555"/><rect x="9" y="10" width="8" height="6" fill="#e0c060" stroke="#806020"/><path d="M8 6 L12 12" stroke="#3060b0" stroke-width="1.5"/></svg>
<div class="t" style="left:1342px;top:55px;font-size:12px;color:#2040a0;font-weight:bold;font-family:"Liberation Serif",serif">A</div>
<svg class="a" style="left:1351px;top:57px;" width="10" height="10" viewBox="0 0 10 10"><path d="M1 5 h7 M5 2 l3 3 l-3 3" fill="none" stroke="#3060c0" stroke-width="1.3"/></svg>
<div class="a" style="left:1365px;top:54px;width:1px;height:16px;background:#ccc"></div>
<svg class="a" style="left:1370px;top:53px;" width="20" height="18" viewBox="0 0 20 18"><path d="M6 2 h12 M9 6 h9 M9 10 h9 M6 14 h12" stroke="#111" stroke-width="1.6"/><path d="M1 8 h6 M4 5 l3 3 l-3 3" fill="none" stroke="#3060c0" stroke-width="1.5"/><path d="M3 1 v16" stroke="#111" stroke-dasharray="1 2"/></svg>
<svg class="a" style="left:1393px;top:53px;" width="20" height="18" viewBox="0 0 20 18"><path d="M4 2 h14 M9 6 h9 M9 10 h9 M4 14 h14" stroke="#111" stroke-width="1.6"/><path d="M8 8 h-6 M5 5 l-3 3 l3 3" fill="none" stroke="#3060c0" stroke-width="1.5"/><path d="M3 1 v16" stroke="#111" stroke-dasharray="1 2"/></svg>
<div class="a" style="left:1416px;top:54px;width:1px;height:16px;background:#ccc"></div>
<svg class="a" style="left:1423px;top:52px;" width="16" height="18" viewBox="0 0 16 18"><path d="M4 16 C1 12 2 9 3 7 v-4 a1.2 1.2 0 0 1 2.4 0 v5 v-6 a1.2 1.2 0 0 1 2.4 0 v6 v-5 a1.2 1.2 0 0 1 2.4 0 v6 v-4 a1.2 1.2 0 0 1 2.4 0 v7 c0 4 -2 6 -4 6z" fill="#e6e6e6" stroke="#c8c8c8"/></svg>
<svg class="a" style="left:1446px;top:53px;" width="16" height="16" viewBox="0 0 16 16"><path d="M2 2 h12 M5 5 h9 M5 8 h9 M5 11 h9 M2 14 h12" stroke="#bbb" stroke-width="1.2"/></svg>
<svg class="a" style="left:1469px;top:52px;" width="16" height="18" viewBox="0 0 16 18"><path d="M2 4 h12 M5 8 h9 M5 11 h9 M2 15 h12" stroke="#bbb" stroke-width="1.2"/><path d="M6 1 a3 3 0 1 0 0.1 0" fill="none" stroke="#bbb"/></svg>
<div class="a" style="left:1490px;top:54px;width:1px;height:16px;background:#ccc"></div>
<svg class="a" style="left:1495px;top:52px;" width="20" height="18" viewBox="0 0 20 18"><path d="M2 16 L10 3" stroke="#3050c0" stroke-width="1.5"/><ellipse cx="12" cy="11" rx="5" ry="4" fill="#5070d0"/></svg>
<svg class="a" style="left:1518px;top:52px;" width="20" height="18" viewBox="0 0 20 18"><path d="M2 16 L10 3" stroke="#c8c8c8" stroke-width="1.5"/><ellipse cx="13" cy="11" rx="5" ry="4" fill="#d0d0d0"/><path d="M3 3 h6 M7 1 l2 2 l-2 2" fill="none" stroke="#c8c8c8" stroke-width="1.3"/></svg>
<svg class="a" style="left:1541px;top:52px;" width="20" height="18" viewBox="0 0 20 18"><path d="M2 16 L10 3" stroke="#c8c8c8" stroke-width="1.5"/><ellipse cx="13" cy="11" rx="5" ry="4" fill="#d0d0d0"/><path d="M9 3 h-6 M5 1 l-2 2 l2 2" fill="none" stroke="#c8c8c8" stroke-width="1.3"/></svg>
<svg class="a" style="left:1564px;top:52px;" width="20" height="18" viewBox="0 0 20 18"><path d="M2 16 L10 3 M2 2 L16 16" stroke="#c8c8c8" stroke-width="1.5"/><ellipse cx="13" cy="11" rx="5" ry="4" fill="#d0d0d0"/></svg>
<div class="a" style="left:1588px;top:49px;width:12px;height:25px;background:linear-gradient(90deg,#c8c8c8,#b0b0b0);border-radius:4px 0 0 4px"></div>
<svg class="a" style="left:1590px;top:62px;" width="9" height="10" viewBox="0 0 9 10"><path d="M1 2 h7 M1 5 h7 l-3.5 3.5z" stroke="#222" fill="#222"/></svg>
<div class="a" style="left:803px;top:76px;width:797px;height:25px;background:#f0f0f0"></div>
<div class="a" style="left:812px;top:78px;width:384px;height:19px;background:#fff;border:1px solid #a5a5a5"></div>
<div class="t" style="left:815px;top:80px;font-size:13.5px;font-weight:bold;color:#111;transform:scaleX(0.9615);transform-origin:0 0;">(General)</div>
<svg class="a" style="left:1181px;top:84px;" width="11" height="7" viewBox="0 0 11 7"><path d="M1 1 l4.5 4.5 l4.5 -4.5" fill="none" stroke="#555" stroke-width="1.1"/></svg>
<div class="a" style="left:1205px;top:78px;width:384px;height:19px;background:#fff;border:1px solid #a5a5a5"></div>
<div class="t" style="left:1209px;top:80px;font-size:13.5px;font-weight:bold;color:#111;transform:scaleX(0.9151);transform-origin:0 0;">TabSample</div>
<svg class="a" style="left:1573px;top:84px;" width="11" height="7" viewBox="0 0 11 7"><path d="M1 1 l4.5 4.5 l4.5 -4.5" fill="none" stroke="#555" stroke-width="1.1"/></svg>
<div class="a" style="left:803px;top:100px;width:797px;height:3px;background:#a0a0a0"></div>
<div class="a" style="left:803px;top:103px;width:794px;height:459px;background:#fff"></div>
<div class="a" style="left:804px;top:103px;width:21px;height:459px;background:#f4f4f4"></div>
<div class="a" style="left:825px;top:103px;width:1px;height:459px;background:#111"></div>
<div class="a" style="left:826px;top:122px;width:753px;height:1px;background:#8a8a8a"></div>
<div class="a" style="left:1579px;top:103px;width:18px;height:459px;background:#f4f4f4"></div>
<div class="a" style="left:1579px;top:103px;width:18px;height:5px;background:#e0e0e0;border:1px solid #999"></div>
<svg class="a" style="left:1583px;top:112px;" width="10" height="7" viewBox="0 0 10 7"><path d="M1 6 l4 -4 l4 4" fill="none" stroke="#555" stroke-width="1.8"/></svg>
<div class="a" style="left:1581px;top:305px;width:15px;height:186px;background:#cdcdcd"></div>
<svg class="a" style="left:1583px;top:550px;" width="10" height="7" viewBox="0 0 10 7"><path d="M1 1 l4 4 l4 -4" fill="none" stroke="#555" stroke-width="1.8"/></svg>
<div class="a" style="left:803px;top:562px;width:794px;height:16px;background:#f4f4f4"></div>
<div class="a" style="left:803px;top:562px;width:17px;height:16px;background:#f0f0f0;border-right:2px solid #777;border-bottom:2px solid #777;border-top:1px solid #fff;border-left:1px solid #fff"></div>
<svg class="a" style="left:806px;top:565px;" width="12" height="9" viewBox="0 0 12 9"><path d="M1 1.5 h9 M4 4.5 h6 M1 7.5 h9" stroke="#111" stroke-width="1.2"/></svg>
<div class="a" style="left:820px;top:561px;width:17px;height:17px;background:#e4e4e4;border-left:2px solid #777;border-top:2px solid #777"></div>
<svg class="a" style="left:823px;top:565px;" width="12" height="10" viewBox="0 0 12 10"><path d="M1 1.5 h9 M3 4 h7 M3 6.5 h7 M1 9 h9" stroke="#111" stroke-width="1.2"/></svg>
<svg class="a" style="left:843px;top:565px;" width="7" height="10" viewBox="0 0 7 10"><path d="M5 1 l-4 4 l4 4" fill="none" stroke="#555" stroke-width="1.8"/></svg>
<div class="a" style="left:855px;top:562px;width:51px;height:15px;background:#cdcdcd"></div>
<svg class="a" style="left:1568px;top:565px;" width="7" height="10" viewBox="0 0 7 10"><path d="M1 1 l4 4 l-4 4" fill="none" stroke="#555" stroke-width="1.8"/></svg>
<svg class="a" style="left:1584px;top:566px;" width="10" height="10" viewBox="0 0 10 10"><g fill="#aaa"><rect x="7" y="1" width="2" height="2"/><rect x="4" y="4" width="2" height="2"/><rect x="7" y="4" width="2" height="2"/><rect x="1" y="7" width="2" height="2"/><rect x="4" y="7" width="2" height="2"/><rect x="7" y="7" width="2" height="2"/></g></svg>
<div class="code" style="left:836px;top:103px;"><span class="k">End Sub</span></div>
<div class="code" style="left:836px;top:141px;"><span class="k">Sub </span><span class="m">TabSample</span>()</div>
<div class="code" style="left:876px;top:160px;"><span class="c">&#x27;<span class="w">タブ記号の</span>ASCII<span class="w">コードは、</span>9<span class="w">番</span></span></div>
<div class="code" style="left:876px;top:179px;"><span class="c">&#x27;<span class="w">定数</span> vbTab <span class="w">で表現することもできる</span></span></div>
<div class="code" style="left:876px;top:198px;"><span class="k">Dim </span><span class="m">s1</span></div>
<div class="code" style="left:876px;top:217px;"><span class="k">Dim </span><span class="m">s2</span></div>
<div class="code" style="left:876px;top:236px;"><span class="k">Dim </span><span class="m">s3</span></div>
<div class="code" style="left:876px;top:255px;"><span class="m">s1</span> = &quot;abcd&quot; &amp; <span class="m">Chr</span>(9) &amp; &quot;efgh&quot;</div>
<div class="code" style="left:876px;top:274px;"><span class="m">s2</span> = &quot;abcd&quot; &amp; <span class="m">vbTab</span> &amp; &quot;efgh&quot;</div>
<div class="code" style="left:876px;top:293px;"><span class="m">s3</span> = &quot;abcd efgh&quot; <span class="c">&#x27;<span class="w">比較のため、間に半角スペースひとつのものも用意した</span></span></div>
<div class="code" style="left:876px;top:331px;"><span class="c">&#x27;<span class="w">イミディエイトウィンドウへの出力では分かりやすい</span></span></div>
<div class="code" style="left:876px;top:350px;"><span class="k">Debug.Print </span><span class="m">s1</span></div>
<div class="code" style="left:876px;top:369px;"><span class="k">Debug.Print </span><span class="m">s2</span></div>
<div class="code" style="left:876px;top:388px;"><span class="k">Debug.Print </span><span class="m">s3</span></div>
<div class="code" style="left:876px;top:426px;"><span class="c">&#x27;<span class="w">セルに出力したときは、</span>Tab<span class="w">の存在は分かりにくい</span></span></div>
<div class="a" style="left:876px;top:446px;width:220px;height:19px;background:#ffff00"></div>
<div class="code" style="left:876px;top:445px;-webkit-text-stroke-color:#ff0;">Range(&quot;A7&quot;).Value = s1</div>
<div class="code" style="left:876px;top:464px;"><span class="m">Range</span>(&quot;A8&quot;).<span class="m">Value</span> = <span class="m">s2</span></div>
<div class="code" style="left:876px;top:483px;"><span class="m">Range</span>(&quot;A9&quot;).<span class="m">Value</span> = <span class="m">s3</span></div>
<div class="code" style="left:876px;top:521px;"><span class="c">&#x27;<span class="w">テキストファイルへの出力では分かりやすい</span></span></div>
<div class="code" style="left:876px;top:540px;"><span class="k">Open </span>&quot;C:¥results¥vbTab.txt&quot; <span class="k">For Output As </span>#1</div>
<svg class="a" style="left:810px;top:448px;" width="14" height="14" viewBox="0 0 14 14"><path d="M1 4 h6 v-3 l6 6 l-6 6 v-3 h-6z" fill="#ffff00" stroke="#333" stroke-width="1"/></svg>
<div class="a" style="left:803px;top:578px;width:797px;height:10px;background:#f7f7f3"></div>
<div class="a" style="left:803px;top:588px;width:797px;height:22px;background:#9db6d6"></div>
<div class="t" style="left:803px;top:591px;font-size:13.5px;color:#111;transform:scaleX(0.5306);transform-origin:0 0;">イミディエイト</div>
<div class="a" style="left:1578px;top:589px;width:20px;height:20px;background:#fff;border:1px solid #888"></div>
<svg class="a" style="left:1581px;top:592px;" width="14" height="14" viewBox="0 0 14 14"><path d="M2 2 L12 12 M12 2 L2 12" stroke="#000" stroke-width="2"/></svg>
<div class="a" style="left:803px;top:610px;width:797px;height:2px;background:#777"></div>
<div class="a" style="left:803px;top:612px;width:794px;height:230px;background:#fff"></div>
<div class="a" style="left:1582px;top:612px;width:15px;height:230px;background:#f4f4f4"></div>
<svg class="a" style="left:1585px;top:617px;" width="10" height="7" viewBox="0 0 10 7"><path d="M1 6 l4 -4 l4 4" fill="none" stroke="#555" stroke-width="1.8"/></svg>
<div class="a" style="left:1583px;top:629px;width:15px;height:196px;background:#cdcdcd"></div>
<svg class="a" style="left:1585px;top:830px;" width="10" height="7" viewBox="0 0 10 7"><path d="M1 1 l4 4 l4 -4" fill="none" stroke="#555" stroke-width="1.8"/></svg>
<div class="a" style="left:803px;top:842px;width:794px;height:15px;background:#f4f4f4"></div>
<svg class="a" style="left:808px;top:845px;" width="7" height="10" viewBox="0 0 7 10"><path d="M5 1 l-4 4 l4 4" fill="none" stroke="#555" stroke-width="1.8"/></svg>
<div class="a" style="left:819px;top:842px;width:55px;height:15px;background:#cdcdcd"></div>
<svg class="a" style="left:1570px;top:845px;" width="7" height="10" viewBox="0 0 7 10"><path d="M1 1 l4 4 l-4 4" fill="none" stroke="#555" stroke-width="1.8"/></svg>
<div class="a" style="left:803px;top:857px;width:797px;height:3px;background:#fff"></div>
<div class="code" style="left:813px;top:613px;color:#111">A1:</div>
<div class="code" style="left:813px;top:632px;color:#111">A2:  &quot;</div>
<div class="code" style="left:813px;top:651px;color:#111">A3: <span class="w">これは</span>&quot;<span class="w">驚くべき</span>&quot;<span class="w">成果です</span></div>
<div class="code" style="left:813px;top:670px;color:#111">A4: &quot;<span class="w">驚くべき</span>&quot;</div>
<div class="code" style="left:813px;top:689px;color:#111">A5: <span class="w">これは</span>&quot;<span class="w">驚くべき</span>&quot;<span class="w">成果です</span></div>
<div class="code" style="left:813px;top:708px;color:#111">abcd    efgh</div>
<div class="code" style="left:813px;top:727px;color:#111">abcd    efgh</div>
<div class="a" style="left:813px;top:747px;width:90px;height:19px;background:#0078d7"></div>
<div class="code" style="left:813px;top:746px;color:#fff;-webkit-text-stroke-color:#0078d7">abcd efgh</div>
<svg class="a" style="left:903px;top:710px;" width="10" height="20" viewBox="0 0 10 20"><path d="M2 1 h6 M5 1 v18 M2 19 h6" stroke="#111" stroke-width="1.2"/></svg>
<div class="a" style="left:0px;top:860px;width:1600px;height:40px;background:#202020"></div>
<svg class="a" style="left:16px;top:872px;" width="17" height="17" viewBox="0 0 17 17"><path d="M0 2 L7 1 V8 H0z M8 1 L16 0 V8 H8z M0 9 H7 V16 L0 15z M8 9 H16 V17 L8 16z" fill="#fff"/></svg>
<div class="a" style="left:48px;top:861px;width:344px;height:39px;background:#383838;border:1px solid #4a4a4a"></div>
<svg class="a" style="left:58px;top:872px;" width="20" height="20" viewBox="0 0 20 20"><circle cx="12" cy="8" r="6" fill="none" stroke="#ddd" stroke-width="1.4"/><path d="M7.5 12.5 L1 19" stroke="#ddd" stroke-width="1.6"/></svg>
<div class="t" style="left:88px;top:873px;font-size:15px;color:#ddd;transform:scaleX(0.8296);transform-origin:0 0;">ここに入力して検索</div>
<svg class="a" style="left:406px;top:871px;" width="18" height="18" viewBox="0 0 18 18"><circle cx="9" cy="9" r="7" fill="none" stroke="#fff" stroke-width="2"/></svg>
<svg class="a" style="left:454px;top:871px;" width="20" height="18" viewBox="0 0 20 18"><rect x="2" y="4" width="11" height="10" fill="none" stroke="#fff" stroke-width="1.6"/><path d="M0 1 h15 M0 17 h15" stroke="#fff" stroke-width="1.6"/><rect x="16" y="3" width="2" height="3" fill="#fff"/><rect x="16" y="8" width="2" height="10" fill="#fff"/></svg>
<svg class="a" style="left:503px;top:869px;" width="24" height="22" viewBox="0 0 24 22"><path d="M1 2 h8 l2 2 h12 v16 h-22z" fill="#f0c040"/><path d="M1 7 h22 v13 h-22z" fill="#ffd860"/><path d="M6 20 v-7 h12 v7 h-3 v-4 h-6 v4z" fill="#3090e0"/></svg>
<svg class="a" style="left:552px;top:868px;" width="24" height="24" viewBox="0 0 24 24"><circle cx="12" cy="12" r="11" fill="#e04030"/><path d="M12 12 L22.5 9 A11 11 0 0 1 7 22z" fill="#f8c020"/><path d="M12 12 L7 22 A11 11 0 0 1 1.5 8z" fill="#20a040"/><path d="M12 12 L1.5 8 A11 11 0 0 1 22 7z" fill="#e04030"/><circle cx="12" cy="12" r="5.5" fill="#fff"/><circle cx="12" cy="12" r="4.2" fill="#3a80e0"/></svg>
<div class="a" style="left:589px;top:861px;width:48px;height:39px;background:#3a3a3a"></div>
<div class="a" style="left:637px;top:861px;width:2px;height:39px;background:#4a4a4a"></div>
<svg class="a" style="left:600px;top:869px;" width="26" height="22" viewBox="0 0 26 22"><rect x="8" y="1" width="17" height="19" fill="#1e9a52"/><rect x="16" y="1" width="9" height="7" fill="#33c481"/><rect x="16" y="8" width="9" height="6" fill="#21a366"/><rect x="1" y="5" width="12" height="12" fill="#107c41"/><path d="M4 8 l6 6 M10 8 l-6 6" stroke="#fff" stroke-width="1.8"/></svg>
<svg class="a" style="left:649px;top:868px;" width="24" height="24" viewBox="0 0 24 24"><rect x="0" y="0" width="24" height="24" rx="3" fill="#e8402a"/><path d="M18 6 h-10 v12 h10" fill="none" stroke="#fff" stroke-width="4"/></svg>
<div class="a" style="left:495px;top:897px;width:40px;height:3px;background:#6aaee8"></div>
<div class="a" style="left:544px;top:897px;width:40px;height:3px;background:#6aaee8"></div>
<div class="a" style="left:589px;top:897px;width:40px;height:3px;background:#6aaee8"></div>
<div class="a" style="left:642px;top:897px;width:40px;height:3px;background:#6aaee8"></div>
<div class="a" style="left:589px;top:897px;width:48px;height:3px;background:#6aaee8"></div>
<svg class="a" style="left:1266px;top:874px;" width="16" height="10" viewBox="0 0 16 10"><path d="M1 9 L8 2 L15 9" fill="none" stroke="#fff" stroke-width="1.4"/></svg>
<svg class="a" style="left:1299px;top:871px;" width="16" height="18" viewBox="0 0 16 18"><rect x="1" y="5" width="9" height="8" fill="none" stroke="#fff" stroke-width="1.5"/><path d="M10 7 l4 -2 v8 l-4 -2" fill="none" stroke="#fff" stroke-width="1.3"/><path d="M3 2 h5 M3 16 h5" stroke="#fff" stroke-width="1"/></svg>
<svg class="a" style="left:1332px;top:870px;" width="12" height="20" viewBox="0 0 12 20"><rect x="3" y="1" width="6" height="11" rx="3" fill="#fff"/><path d="M1 9 a5 5 0 0 0 10 0 M6 14 v4 M3 18 h6" fill="none" stroke="#fff" stroke-width="1.3"/></svg>
<svg class="a" style="left:1365px;top:873px;" width="16" height="14" viewBox="0 0 16 14"><path d="M2 12 a10 10 0 0 1 10 -10 M5 12 a7 7 0 0 1 7 -7 M8 12 a4 4 0 0 1 4 -4" fill="none" stroke="#bbb" stroke-width="1.3"/><circle cx="12" cy="12" r="1.3" fill="#fff"/></svg>
<svg class="a" style="left:1394px;top:871px;" width="18" height="16" viewBox="0 0 18 16"><path d="M5 1 L1 4 L5 7 L9 4z M13 1 L9 4 L13 7 L17 4z M5 7 L1 10 L5 13 L9 10z M13 7 L9 10 L13 13 L17 10z M5 14 L9 16 L13 14 L9 11z" fill="#fff"/></svg>
<div class="t" style="left:1423px;top:869px;font-size:19px;color:#fff;font-family:"Liberation Serif",serif;font-weight:bold">A</div>
<svg class="a" style="left:1450px;top:870px;" width="20" height="18" viewBox="0 0 20 18"><circle cx="8" cy="8" r="7" fill="#1a6fd8"/><circle cx="14" cy="12" r="3" fill="#e03030"/><circle cx="12" cy="14" r="2" fill="#f0c000"/></svg>
<div class="t" style="left:1501px;top:865px;font-size:12.5px;color:#fff;transform:scaleX(0.9037);transform-origin:0 0;">9:00</div>
<div class="t" style="left:1483px;top:882px;font-size:12.5px;color:#fff;transform:scaleX(0.9431);transform-origin:0 0;">2021/04/30</div>
<svg class="a" style="left:1558px;top:870px;" width="22" height="22" viewBox="0 0 22 22"><path d="M2 2 h16 v11 h-11 l-3 3 v-3 h-2z" fill="#fff"/><path d="M5 5 h10 M5 8 h10 M5 11 h6" stroke="#202020" stroke-width="1.2"/><circle cx="15" cy="16" r="6" fill="#202020" stroke="#777"/></svg>
<div class="t" style="left:1571px;top:882px;font-size:11px;color:#fff">3</div>
<div class="a" style="left:1595px;top:860px;width:1px;height:40px;background:#555"></div>
</body></html>
